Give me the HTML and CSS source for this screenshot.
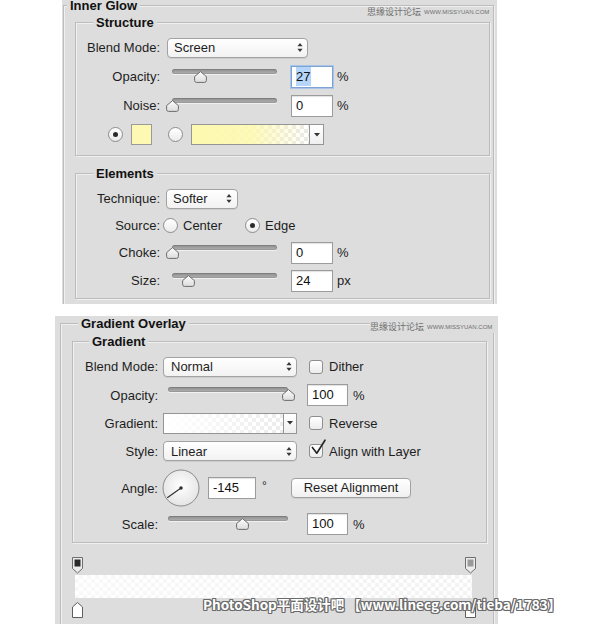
FILE: index.html
```html
<!DOCTYPE html>
<html>
<head>
<meta charset="utf-8">
<link rel="stylesheet" href="styles.css">
</head>
<body>
<div class="panel p1">
  <div class="wm wm1">思缘设计论坛<span class="wm-url">WWW.MISSYUAN.COM</span></div>
  <div class="outer o1">
    <div class="gtitle t-o1">Inner Glow</div>
    <div class="group g-struct">
      <div class="gtitle t-in1">Structure</div>
      <div class="rows rows-struct">
        <div class="row h29">
          <span class="label l84">Blend Mode:</span>
          <div class="select s-blend1"><span>Screen</span><svg class="arr" width="6" height="11" viewBox="0 0 6 11"><path d="M0.4 4.2 L3 1 L5.6 4.2Z M0.4 6.8 L3 10 L5.6 6.8Z" fill="#3a3a3a"/></svg></div>
        </div>
        <div class="row h29">
          <span class="label l84">Opacity:</span>
          <div class="slider sl1"><div class="track"></div><svg class="thumb" style="left:28px" width="13" height="12" viewBox="0 0 13 12"><defs><linearGradient id="tg1" x1="0" y1="0" x2="0" y2="1"><stop offset="0" stop-color="#fdfdfd"/><stop offset="1" stop-color="#dcdcdc"/></linearGradient></defs><path d="M6.5 0.6 L12.4 5.6 V9.4 Q12.4 11.4 10.4 11.4 H2.6 Q0.6 11.4 0.6 9.4 V5.6 Z" fill="url(#tg1)" stroke="#6c6c6c" stroke-width="1"/></svg></div>
          <div class="field f-top focus"><span class="sel">27</span></div>
          <span class="unit">%</span>
        </div>
        <div class="row h29">
          <span class="label l84">Noise:</span>
          <div class="slider sl1"><div class="track"></div><svg class="thumb" style="left:0px" width="13" height="12" viewBox="0 0 13 12"><path d="M6.5 0.6 L12.4 5.6 V9.4 Q12.4 11.4 10.4 11.4 H2.6 Q0.6 11.4 0.6 9.4 V5.6 Z" fill="url(#tg1)" stroke="#6c6c6c" stroke-width="1"/></svg></div>
          <div class="field f-top">0</div>
          <span class="unit">%</span>
        </div>
        <div class="row h29 colorrow">
          <div class="radio on"></div>
          <div class="swatch"></div>
          <div class="radio r2"></div>
          <div class="gradbox gb-yellow"></div>
          <div class="ddbtn"><svg width="6" height="4" viewBox="0 0 6 4"><path d="M0 0 H6 L3 3.6Z" fill="#333"/></svg></div>
        </div>
      </div>
    </div>
    <div class="group g-elem">
      <div class="gtitle t-in1">Elements</div>
      <div class="rows rows-elem">
        <div class="row h27">
          <span class="label l84">Technique:</span>
          <div class="select s-tech"><span>Softer</span><svg class="arr" width="6" height="11" viewBox="0 0 6 11"><path d="M0.4 4.2 L3 1 L5.6 4.2Z M0.4 6.8 L3 10 L5.6 6.8Z" fill="#3a3a3a"/></svg></div>
        </div>
        <div class="row h27">
          <span class="label l84">Source:</span>
          <div class="opt opt1"><div class="radio"></div><span class="optlabel">Center</span></div>
          <div class="opt"><div class="radio on"></div><span class="optlabel">Edge</span></div>
        </div>
        <div class="row h27">
          <span class="label l84">Choke:</span>
          <div class="slider sl1"><div class="track"></div><svg class="thumb" style="left:0px" width="13" height="12" viewBox="0 0 13 12"><path d="M6.5 0.6 L12.4 5.6 V9.4 Q12.4 11.4 10.4 11.4 H2.6 Q0.6 11.4 0.6 9.4 V5.6 Z" fill="url(#tg1)" stroke="#6c6c6c" stroke-width="1"/></svg></div>
          <div class="field f-top">0</div>
          <span class="unit">%</span>
        </div>
        <div class="row h29">
          <span class="label l84">Size:</span>
          <div class="slider sl1"><div class="track"></div><svg class="thumb" style="left:16px" width="13" height="12" viewBox="0 0 13 12"><path d="M6.5 0.6 L12.4 5.6 V9.4 Q12.4 11.4 10.4 11.4 H2.6 Q0.6 11.4 0.6 9.4 V5.6 Z" fill="url(#tg1)" stroke="#6c6c6c" stroke-width="1"/></svg></div>
          <div class="field f-top">24</div>
          <span class="unit">px</span>
        </div>
      </div>
    </div>
  </div>
</div>

<div class="panel p2">
  <div class="wm wm2">思缘设计论坛<span class="wm-url">WWW.MISSYUAN.COM</span></div>
  <div class="outer o2">
    <div class="gtitle t-o2">Gradient Overlay</div>
    <div class="group g-grad">
      <div class="gtitle t-in2">Gradient</div>
      <div class="rows rows-grad">
        <div class="row h29">
          <span class="label l85">Blend Mode:</span>
          <div class="select s-blend2"><span>Normal</span><svg class="arr" width="6" height="11" viewBox="0 0 6 11"><path d="M0.4 4.2 L3 1 L5.6 4.2Z M0.4 6.8 L3 10 L5.6 6.8Z" fill="#3a3a3a"/></svg></div>
          <div class="cb"></div><span class="cblabel">Dither</span>
        </div>
        <div class="row h28">
          <span class="label l85">Opacity:</span>
          <div class="slider sl2"><div class="track"></div><svg class="thumb" style="left:120px" width="13" height="12" viewBox="0 0 13 12"><path d="M6.5 0.6 L12.4 5.6 V9.4 Q12.4 11.4 10.4 11.4 H2.6 Q0.6 11.4 0.6 9.4 V5.6 Z" fill="url(#tg1)" stroke="#6c6c6c" stroke-width="1"/></svg></div>
          <div class="field f-bot">100</div>
          <span class="unit u2">%</span>
        </div>
        <div class="row h28">
          <span class="label l85">Gradient:</span>
          <div class="gradbox gb-white"></div>
          <div class="ddbtn dd2"><svg width="6" height="4" viewBox="0 0 6 4"><path d="M0 0 H6 L3 3.6Z" fill="#333"/></svg></div>
          <div class="cb"></div><span class="cblabel">Reverse</span>
        </div>
        <div class="row h28">
          <span class="label l85">Style:</span>
          <div class="select s-blend2"><span>Linear</span><svg class="arr" width="6" height="11" viewBox="0 0 6 11"><path d="M0.4 4.2 L3 1 L5.6 4.2Z M0.4 6.8 L3 10 L5.6 6.8Z" fill="#3a3a3a"/></svg></div>
          <div class="cb"><svg class="check" width="18" height="18" viewBox="0 0 18 18"><path d="M3.4 8.4 L7.8 14.2 L16 1.2" fill="none" stroke="#222" stroke-width="1.6" stroke-linejoin="round" stroke-linecap="round"/></svg></div><span class="cblabel">Align with Layer</span>
        </div>
        <div class="row h46">
          <span class="label l85">Angle:</span>
          <svg class="dial" width="38" height="38" viewBox="0 0 38 38"><defs><radialGradient id="dg" cx="0.5" cy="0.45" r="0.6"><stop offset="0" stop-color="#ffffff"/><stop offset="1" stop-color="#e2e2e2"/></radialGradient></defs><circle cx="19" cy="19" r="18" fill="url(#dg)" stroke="#8a8a8a" stroke-width="1"/><line x1="19" y1="19" x2="5.6" y2="28.4" stroke="#333" stroke-width="1.2" stroke-linecap="round"/><circle cx="19" cy="19" r="1.8" fill="#333"/></svg>
          <div class="field f-angle">-145</div>
          <span class="deg">°</span>
          <div class="btn">Reset Alignment</div>
        </div>
        <div class="row h26">
          <span class="label l85">Scale:</span>
          <div class="slider sl2"><div class="track"></div><svg class="thumb" style="left:74px" width="13" height="12" viewBox="0 0 13 12"><path d="M6.5 0.6 L12.4 5.6 V9.4 Q12.4 11.4 10.4 11.4 H2.6 Q0.6 11.4 0.6 9.4 V5.6 Z" fill="url(#tg1)" stroke="#6c6c6c" stroke-width="1"/></svg></div>
          <div class="field f-bot">100</div>
          <span class="unit u2">%</span>
        </div>
      </div>
    </div>
    <div class="editor">
      <div class="stoprow">
        <svg class="stop st-l" width="11" height="17" viewBox="0 0 11 17"><path d="M0.5 0.5 H10.5 V11.5 L5.5 16 L0.5 11.5 Z" fill="#ececec" stroke="#6e6e6e"/><rect x="2.5" y="2.5" width="6" height="7" fill="#2a2a2a"/></svg>
        <svg class="stop st-r" width="11" height="17" viewBox="0 0 11 17"><path d="M0.5 0.5 H10.5 V11.5 L5.5 16 L0.5 11.5 Z" fill="#ececec" stroke="#6e6e6e"/><rect x="2.5" y="2.5" width="6" height="7" fill="#9a9a9a"/></svg>
      </div>
      <div class="gbar"></div>
      <div class="stoprow sr2">
        <svg class="stop st-l" width="11" height="16" viewBox="0 0 11 16"><path d="M5.5 0.5 L10.5 5 V15.5 H0.5 V5 Z" fill="#ffffff" stroke="#5e5e5e"/></svg>
        <svg class="stop st-r" width="11" height="16" viewBox="0 0 11 16"><path d="M5.5 0.5 L10.5 5 V15.5 H0.5 V5 Z" fill="#ffffff" stroke="#5e5e5e"/></svg>
      </div>
    </div>
  </div>
</div>

<div class="wm-bottom">PhotoShop平面设计吧 【www.linecg.com/tieba/1783】</div>
</body>
</html>
```

FILE: styles.css
```css
html, body {
  margin: 0;
  padding: 0;
}
body {
  background: #ffffff;
  font-family: "Liberation Sans", Arial, sans-serif;
  font-size: 13px;
  color: #1d1d1d;
  width: 610px;
  height: 624px;
  overflow: hidden;
  position: relative;
}

.panel {
  background: #dddddd;
  position: relative;
  overflow: hidden;
}
.p1 {
  margin-left: 62px;
  width: 435px;
  height: 304px;
}
.p2 {
  margin-left: 55px;
  margin-top: 12px;
  width: 443px;
  height: 308px;
}

.outer,
.group {
  border: 1px solid #bcbcbc;
  box-shadow: inset 1px 1px 0 rgba(255, 255, 255, 0.55), 1px 1px 0 rgba(255, 255, 255, 0.55);
  box-sizing: border-box;
}
.outer {
  border-bottom: none;
  height: 420px;
}
.o1 {
  margin: 5px 0 0 1px;
  padding-left: 11px;
  width: 431px;
}
.o2 {
  margin: 7px 0 0 5px;
  padding-left: 11px;
  width: 434px;
}

.gtitle {
  width: max-content;
  height: 15px;
  line-height: 15px;
  margin-top: -8px;
  padding: 0 3px;
  background: #dddddd;
  font-weight: bold;
  color: #111;
}
.t-o1 {
  margin-left: -8px;
  margin-top: -6px;
  height: 13px;
  line-height: 12px;
}
.t-o2 { margin-left: 6px; }
.t-in1 { margin-left: 17px; }
.t-in2 { margin-left: 16px; }

.group {
  width: 415px;
}
.g-struct { margin-top: 9px; padding-bottom: 6px; }
.g-elem { margin-top: 17px; padding-bottom: 3px; }
.g-grad { margin-top: 10px; padding-bottom: 5px; }

.rows-struct { margin-top: 3px; }
.rows-elem { margin-top: 4px; }
.rows-grad { margin-top: 3px; }

.row {
  display: flex;
  align-items: center;
}
.h26 { height: 26px; }
.h27 { height: 27px; }
.h28 { height: 28px; }
.h29 { height: 29px; }
.h46 { height: 46px; }

.label {
  flex: none;
  text-align: right;
  white-space: nowrap;
}
.l84 { width: 84px; }
.l85 { width: 85px; }

/* select */
.select {
  flex: none;
  display: flex;
  align-items: center;
  justify-content: space-between;
  height: 20px;
  box-sizing: border-box;
  border: 1px solid #a2a2a2;
  border-radius: 4px;
  background: linear-gradient(#ffffff, #f2f2f2);
  box-shadow: 0 1px 0 rgba(0, 0, 0, 0.07);
  padding: 0 4px 0 6px;
}
.s-blend1 { margin-left: 7px; width: 141px; }
.s-tech { margin-left: 6px; width: 72px; padding-right: 5px; }
.s-blend2 { margin-left: 5px; width: 134px; padding-left: 7px; }
.arr { display: block; }

/* slider */
.slider {
  position: relative;
  flex: none;
  height: 22px;
}
.sl1 { margin-left: 12px; width: 105px; }
.sl2 { margin-left: 10px; width: 120px; }
.track {
  position: absolute;
  left: 0;
  right: 0;
  top: 3px;
  height: 5px;
  border-radius: 3px;
  background: linear-gradient(#8c8c8c, #b3b3b3);
  box-shadow: inset 0 0 0 1px rgba(0, 0, 0, 0.12), 0 1px 0 rgba(255, 255, 255, 0.6);
}
.thumb {
  position: absolute;
  top: 5px;
  margin-left: -6.5px;
  display: block;
}

/* fields */
.field {
  flex: none;
  height: 22px;
  box-sizing: border-box;
  border: 1px solid #9c9c9c;
  background: #ffffff;
  box-shadow: inset 0 1px 1px rgba(0, 0, 0, 0.12);
  padding-left: 4px;
  line-height: 20px;
  color: #111;
}
.f-top { margin-left: 14px; width: 42px; }
.f-bot { margin-left: 19px; width: 41px; }
.f-angle { margin-left: 8px; width: 48px; }
.focus {
  border-color: #7fa3d1;
  box-shadow: 0 0 0 1px #a8c4e8;
}
.sel {
  background: #b6d5fa;
  padding: 2px 1px 2px 0;
}
.unit {
  margin-left: 4px;
}
.u2 { margin-left: 5px; }

/* radio */
.radio {
  flex: none;
  width: 15px;
  height: 15px;
  border-radius: 50%;
  border: 1px solid #8d8d8d;
  background: linear-gradient(#ffffff, #ebebeb);
  box-sizing: border-box;
  display: flex;
  align-items: center;
  justify-content: center;
}
.radio.on::after {
  content: "";
  width: 5px;
  height: 5px;
  border-radius: 50%;
  background: #2b2b2b;
}

/* color row */
.colorrow { padding-left: 32px; }
.swatch {
  flex: none;
  margin-left: 8px;
  width: 21px;
  height: 21px;
  box-sizing: border-box;
  border: 1px solid #9a9a9a;
  background: #fdf9b3;
}
.r2 { margin-left: 16px; }
.gradbox {
  flex: none;
  height: 21px;
  box-sizing: border-box;
  border: 1px solid #959595;
  border-right: none;
}
.gb-yellow {
  margin-left: 8px;
  width: 118px;
  background:
    linear-gradient(to right, #fdf9b0 0%, rgba(253, 249, 176, 0.9) 50%, rgba(253, 249, 176, 0) 100%),
    repeating-conic-gradient(#e9e9e9 0 25%, #ffffff 0 50%) 0 0 / 8px 8px;
}
.gb-white {
  margin-left: 5px;
  width: 120px;
  background:
    linear-gradient(to right, rgba(255, 255, 255, 1) 0%, rgba(255, 255, 255, 0) 100%),
    repeating-conic-gradient(#ececec 0 25%, #ffffff 0 50%) 0 0 / 8px 8px;
}
.ddbtn {
  flex: none;
  width: 15px;
  height: 21px;
  box-sizing: border-box;
  border: 1px solid #959595;
  background: linear-gradient(#ffffff, #efefef);
  display: flex;
  align-items: center;
  justify-content: center;
}
.dd2 { width: 14px; }

/* source options */
.opt {
  display: flex;
  align-items: center;
  flex: none;
}
.opt1 { width: 82px; margin-left: 3px; }
.optlabel { margin-left: 5px; }

/* checkbox */
.cb {
  flex: none;
  position: relative;
  margin-left: 12px;
  width: 14px;
  height: 14px;
  box-sizing: border-box;
  border: 1px solid #8e8e8e;
  border-radius: 3px;
  background: linear-gradient(#ffffff, #ececec);
}
.check {
  position: absolute;
  left: -1px;
  top: -6px;
  overflow: visible;
}
.cblabel { margin-left: 6px; }

/* angle */
.dial {
  flex: none;
  display: block;
  margin-left: 4px;
}
.deg {
  flex: none;
  width: 29px;
  margin-left: 6px;
  font-size: 12px;
  margin-top: -4px;
}
.btn {
  flex: none;
  width: 120px;
  height: 20px;
  box-sizing: border-box;
  border: 1px solid #a0a0a0;
  border-radius: 4px;
  background: linear-gradient(#ffffff, #f0f0f0);
  box-shadow: 0 1px 0 rgba(0, 0, 0, 0.07);
  text-align: center;
  line-height: 18px;
}

/* gradient editor */
.editor {
  margin-top: 14px;
  padding-left: 3px;
  width: 397px;
}
.stoprow {
  position: relative;
  height: 17px;
}
.sr2 {
  margin-top: 4px;
  height: 16px;
}
.stop {
  position: absolute;
  top: 0;
  display: block;
}
.st-l { left: -3px; }
.st-r { left: 390px; }
.gbar {
  margin-top: 1px;
  height: 23px;
  background:
    linear-gradient(to right, rgba(255, 255, 255, 0.55), rgba(255, 255, 255, 0.2)),
    repeating-conic-gradient(#f0f0f0 0 25%, #ffffff 0 50%) 0 0 / 8px 8px;
}

/* watermarks */
.wm {
  position: absolute;
  white-space: nowrap;
  font-family: "Noto Sans CJK SC", "Liberation Sans", sans-serif;
  font-size: 9px;
  line-height: 12px;
  color: #6f6f6f;
  z-index: 2;
}
.wm1 { top: 6px; left: 305px; }
.wm2 { top: 5px; left: 315px; background: #dddddd; padding-right: 4px; }
.wm-url {
  font-family: "Liberation Sans", Arial, sans-serif;
  font-size: 6px;
  margin-left: 3px;
  vertical-align: 1px;
}
.wm-bottom {
  position: absolute;
  left: 203px;
  top: 595px;
  white-space: nowrap;
  font-family: "Noto Sans CJK SC", "Liberation Sans", sans-serif;
  font-weight: bold;
  font-size: 13.5px;
  line-height: 18px;
  color: #ffffff;
  text-shadow: 1px 0 0 #6a6a6a, -1px 0 0 #6a6a6a, 0 1px 0 #6a6a6a, 0 -1px 0 #6a6a6a, 1px 1px 0 #6a6a6a, -1px -1px 0 #6a6a6a, 1px -1px 0 #6a6a6a, -1px 1px 0 #6a6a6a;
  z-index: 3;
}
```
